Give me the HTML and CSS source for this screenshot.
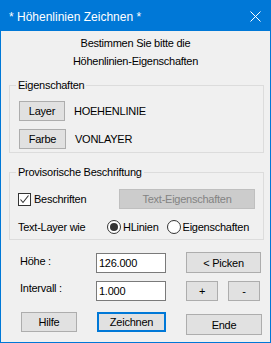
FILE: index.html
```html
<!DOCTYPE html>
<html lang="de">
<head>
    <meta charset="UTF-8">
    <title>Höhenlinien Zeichnen</title>
    <link rel="stylesheet" href="styles.css">
</head>
<body>
<div class="window">
    <div class="titlebar">
        <span class="title">* Höhenlinien Zeichnen *</span>
        <svg class="close" width="11" height="11" viewBox="0 0 11 11">
            <path d="M0.5 0.5 L10.5 10.5 M10.5 0.5 L0.5 10.5" stroke="#fff" stroke-width="1" fill="none"/>
        </svg>
    </div>

    <div class="client">
        <p class="intro">Bestimmen Sie bitte die<br>Höhenlinien-Eigenschaften</p>

        <fieldset class="group group-props">
            <legend>Eigenschaften</legend>
            <div class="prop-row">
                <button class="btn btn-layer">Layer</button>
                <span class="value">HOEHENLINIE</span>
            </div>
            <div class="prop-row">
                <button class="btn btn-farbe">Farbe</button>
                <span class="value">VONLAYER</span>
            </div>
        </fieldset>

        <fieldset class="group group-label">
            <legend>Provisorische Beschriftung</legend>
            <div class="label-row">
                <label class="check">
                    <span class="box">
                        <svg width="11" height="11" viewBox="0 0 11 11">
                            <path d="M1.5 5.5 L4 8.5 L9.5 1.5" stroke="#333" stroke-width="1.1" fill="none"/>
                        </svg>
                    </span>
                    Beschriften
                </label>
                <button class="btn btn-disabled">Text-Eigenschaften</button>
            </div>
            <div class="radio-row">
                <span class="radio-caption">Text-Layer wie</span>
                <label class="radio"><span class="dot checked"></span>HLinien</label>
                <label class="radio radio-second"><span class="dot"></span>Eigenschaften</label>
            </div>
        </fieldset>

        <div class="fields">
            <span class="field-label">Höhe :</span>
            <input class="field" type="text" value="126.000">
            <button class="btn btn-wide">&lt; Picken</button>

            <span class="field-label label-intervall">Intervall :</span>
            <input class="field" type="text" value="1.000">
            <div class="plusminus">
                <button class="btn btn-small">+</button>
                <button class="btn btn-small">-</button>
            </div>
        </div>

        <div class="actions">
            <button class="btn btn-hilfe">Hilfe</button>
            <button class="btn btn-default">Zeichnen</button>
            <button class="btn btn-ende">Ende</button>
        </div>
    </div>
</div>
</body>
</html>
```

FILE: styles.css
```css
* {
    box-sizing: border-box;
}
body {
    margin: 0;
    font-family: "Liberation Sans", Arial, sans-serif;
    font-size: 11px;
    color: #000;
}

.window {
    width: 271px;
    height: 343px;
    border: 1px solid #0078d7;
    background-color: #f0f0f0;
    display: flex;
    flex-direction: column;
}

.titlebar {
    height: 30px;
    background-color: #0078d7;
    color: #fff;
    display: flex;
    align-items: center;
    justify-content: space-between;
    padding: 0 9px 0 8px;
    flex-shrink: 0;
}
.title {
    font-size: 12px;
    line-height: 14px;
    padding-top: 1px;
}
.close {
    display: block;
}

.client {
    letter-spacing: -0.25px;
}

.intro {
    margin: 3px 0 0;
    text-align: center;
    line-height: 18px;
}

.group {
    margin: 0 6px 0 8px;
    border: 1px solid #dcdcdc;
    padding: 0 0 0 6px;
    min-width: 0;
}
.group legend {
    padding: 0 2px;
    line-height: 12px;
}

.group-props {
    margin-top: 9px;
    padding-top: 10px;
    padding-bottom: 3px;
}
.prop-row {
    display: flex;
    align-items: center;
    margin-left: 3px;
}
.prop-row + .prop-row {
    margin-top: 8px;
}
.value {
    margin-left: 9px;
}

.btn {
    font-family: inherit;
    font-size: 11px;
    letter-spacing: -0.25px;
    color: #000;
    background-color: #e1e1e1;
    border: 1px solid #adadad;
    border-radius: 0;
    padding: 0;
    height: 20px;
    margin: 0;
}
.btn-layer {
    width: 46px;
}
.btn-farbe {
    width: 47px;
}

.group-label {
    margin-top: 13px;
    padding-top: 11px;
    padding-bottom: 4px;
}
.label-row {
    display: flex;
    align-items: center;
}
.check {
    display: flex;
    align-items: center;
    margin-left: 2px;
    gap: 3px;
}
.box {
    width: 13px;
    height: 13px;
    border: 1px solid #333;
    background-color: #fff;
    display: flex;
    align-items: center;
    justify-content: center;
}
.box svg {
    display: block;
}
.btn-disabled {
    margin-left: auto;
    margin-right: 8px;
    width: 136px;
    background-color: #cccccc;
    border-color: #bfbfbf;
    color: #838383;
}

.radio-row {
    display: flex;
    align-items: center;
    margin-top: 10px;
    margin-left: 2px;
    height: 16px;
}
.radio-caption {
    width: 89px;
}
.radio {
    display: flex;
    align-items: center;
    gap: 2px;
}
.radio-second {
    margin-left: 8px;
}
.dot {
    width: 14px;
    height: 14px;
    border: 1px solid #333;
    border-radius: 50%;
    background-color: #fff;
    display: flex;
    align-items: center;
    justify-content: center;
}
.dot.checked::after {
    content: "";
    width: 8px;
    height: 8px;
    border-radius: 50%;
    background-color: #333;
}

.fields {
    display: grid;
    grid-template-columns: 56px 70px 75px;
    column-gap: 20px;
    row-gap: 8px;
    align-items: center;
    margin: 12px 0 0 19px;
}
.field-label {
    align-self: start;
    padding-top: 3px;
}
.label-intervall {
    padding-top: 1px;
}
.field {
    width: 70px;
    height: 20px;
    border: 1px solid #7a7a7a;
    background-color: #fff;
    font-family: inherit;
    font-size: 11px;
    letter-spacing: -0.25px;
    padding: 0 0 0 2px;
    margin: 0;
    color: #000;
}
.btn-wide {
    width: 75px;
    height: 21px;
}
.plusminus {
    display: flex;
    gap: 10px;
}
.btn-small {
    width: 32px;
    height: 20px;
}

.actions {
    display: flex;
    align-items: flex-start;
    margin: 11px 0 0 20px;
}
.btn-hilfe {
    width: 56px;
}
.btn-default {
    width: 69px;
    margin-left: 20px;
    border: 2px solid #0078d7;
}
.btn-ende {
    width: 76px;
    height: 21px;
    margin-left: 20px;
    margin-top: 2px;
}
```
